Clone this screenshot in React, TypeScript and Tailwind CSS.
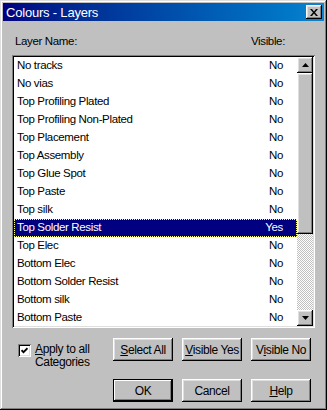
import React from 'react';

const layers: [string, string][] = [
    ['No tracks', 'No'],
    ['No vias', 'No'],
    ['Top Profiling Plated', 'No'],
    ['Top Profiling Non-Plated', 'No'],
    ['Top Placement', 'No'],
    ['Top Assembly', 'No'],
    ['Top Glue Spot', 'No'],
    ['Top Paste', 'No'],
    ['Top silk', 'No'],
    ['Top Solder Resist', 'Yes'],
    ['Top Elec', 'No'],
    ['Bottom Elec', 'No'],
    ['Bottom Solder Resist', 'No'],
    ['Bottom silk', 'No'],
    ['Bottom Paste', 'No'],
];

const raised =
    'shadow-[inset_-1px_-1px_#000,inset_1px_1px_#fff,inset_-2px_-2px_#808080,inset_2px_2px_#dfdfdf]';
const sunken =
    'shadow-[inset_1px_1px_#808080,inset_-1px_-1px_#fff,inset_2px_2px_#000,inset_-2px_-2px_#dfdfdf]';

function Btn({ children, def }: { children: React.ReactNode; def?: boolean }) {
    return (
        <button
            className={
                'w-[60px] h-[23px] bg-[#c0c0c0] text-[12px] tracking-[-0.4px] text-black flex items-center justify-center ' +
                (def ? 'border border-black shadow-[inset_-1px_-1px_#000,inset_1px_1px_#fff,inset_-2px_-2px_#808080]' : raised)
            }
        >
            {children}
        </button>
    );
}

function ScrollBtn({ down }: { down?: boolean }) {
    return (
        <div className={'w-4 h-4 bg-[#c0c0c0] flex items-center justify-center ' + raised}>
            <svg width="7" height="4" viewBox="0 0 7 4">
                <path d={down ? 'M0 0h7L3.5 4z' : 'M3.5 0L7 4H0z'} fill="#000" />
            </svg>
        </div>
    );
}

export default function App() {
    return (
        <div
            className={
                'w-[327px] h-[410px] bg-[#c0c0c0] p-[3px] flex flex-col text-black ' +
                'shadow-[inset_-1px_-1px_#000,inset_1px_1px_#dfdfdf,inset_-2px_-2px_#808080,inset_2px_2px_#fff]'
            }
            style={{ fontFamily: '"Liberation Sans", Arial, sans-serif' }}
        >
            {/* title bar */}
            <div className="h-[18px] bg-gradient-to-r from-[#000080] to-[#1084d0] flex items-center justify-between pl-[3px] pr-[2px]">
                <span className="text-white text-[13px] leading-none tracking-[-0.2px]">Colours - Layers</span>
                <div className={'w-4 h-[14px] bg-[#c0c0c0] flex items-center justify-center ' + raised}>
                    <svg width="8" height="7" viewBox="0 0 8 7">
                        <path d="M0 0h2l2 2.5L6 0h2L5 3.5 8 7H6L4 4.5 2 7H0l3-3.5z" fill="#000" />
                    </svg>
                </div>
            </div>

            <div className="flex-1 px-[9px] pt-[13px] text-[11.5px] tracking-[-0.35px]">
                <div className="flex justify-between leading-[14px] pl-[3px] pr-[30px]">
                    <span>Layer Name:</span>
                    <span>Visible:</span>
                </div>

                {/* list box */}
                <div className={'mt-[7px] h-[273px] bg-white flex p-[2px] ' + sunken}>
                    <div className="flex-1 overflow-hidden">
                        {layers.map(([name, vis], i) => (
                            <div
                                key={name}
                                className={
                                    'h-[18px] flex items-center justify-between pl-[3px] pr-[14px] ' +
                                    (i === 9 ? 'bg-[#000080] text-white outline outline-1 outline-dotted outline-[#ffff80] -outline-offset-1' : '')
                                }
                            >
                                <span>{name}</span>
                                <span>{vis}</span>
                            </div>
                        ))}
                    </div>
                    <div className="w-4 flex flex-col">
                        <ScrollBtn />
                        <div className={'h-[161px] bg-[#c0c0c0] ' + raised} />
                        <div className="flex-1 bg-[repeating-conic-gradient(#c0c0c0_0_25%,#fff_0_50%)] bg-[length:2px_2px]" />
                        <ScrollBtn down />
                    </div>
                </div>

                {/* actions */}
                <div className="flex mt-[10px] items-start">
                    <div className="flex items-start w-[101px] pl-[6px] pt-[6px]">
                        <div className={'w-[13px] h-[13px] bg-white flex items-center justify-center ' + sunken}>
                            <svg width="7" height="7" viewBox="0 0 7 7">
                                <path d="M0.5 3.2L2.5 5.2L6.5 1.2" stroke="#000" strokeWidth="1.8" fill="none" />
                            </svg>
                        </div>
                        <span className="ml-[4px] text-[12px] leading-[13px] -mt-[1px]">
                            <span className="underline">A</span>pply to all
                            <br />
                            Categories
                        </span>
                    </div>
                    <div className="flex flex-col gap-[18px]">
                        <div className="flex gap-[9px]">
                            <Btn><span className="underline">S</span>elect All</Btn>
                            <Btn><span className="underline">V</span>isible Yes</Btn>
                            <Btn>V<span className="underline">i</span>sible No</Btn>
                        </div>
                        <div className="flex gap-[9px]">
                            <Btn def>OK</Btn>
                            <Btn>Cancel</Btn>
                            <Btn><span className="underline">H</span>elp</Btn>
                        </div>
                    </div>
                </div>
            </div>
        </div>
    );
}
